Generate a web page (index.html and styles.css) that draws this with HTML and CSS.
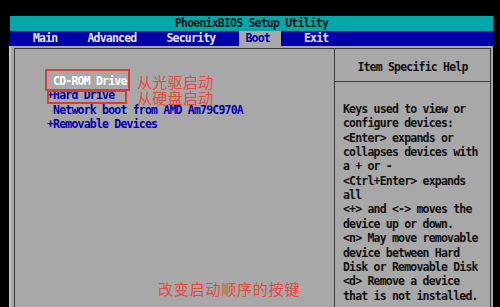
FILE: index.html
```html
<!DOCTYPE html>
<html lang="zh-CN">
<head>
<meta charset="UTF-8">
<meta name="viewport" content="width=device-width, initial-scale=1.0">
<title>PhoenixBIOS Setup Utility</title>
<link rel="stylesheet" href="styles.css">
</head>
<body>

<!-- BIOS screen -->
<div class="screen">
    <div class="title-bar">PhoenixBIOS Setup Utility</div>

    <div class="menu-bar">
        <span class="menu-item">Main</span>
        <span class="menu-item">Advanced</span>
        <span class="menu-item">Security</span>
        <span class="menu-item active">Boot</span>
        <span class="menu-item">Exit</span>
    </div>

    <div class="main">
        <div class="frame">
            <div class="boot-list">
                <div class="boot-item selected"> CD-ROM Drive</div>
                <div class="boot-item">+Hard Drive</div>
                <div class="boot-item"> Network boot from AMD Am79C970A</div>
                <div class="boot-item">+Removable Devices</div>
            </div>

            <div class="help">
                <div class="help-title">Item Specific Help</div>
                <div class="help-body">Keys used to view or
configure devices:
&lt;Enter&gt; expands or
collapses devices with
a + or -
&lt;Ctrl+Enter&gt; expands
all
&lt;+&gt; and &lt;-&gt; moves the
device up or down.
&lt;n&gt; May move removable
device between Hard
Disk or Removable Disk
&lt;d&gt; Remove a device
that is not installed.</div>
            </div>
        </div>
    </div>
</div>

<!-- Annotations drawn over the screenshot -->
<div class="mark mark-cdrom"></div>
<div class="mark mark-hdd"></div>
<div class="note note-cdrom">从光驱启动</div>
<div class="note note-hdd">从硬盘启动</div>
<div class="note note-keys">改变启动顺序的按键</div>

</body>
</html>
```

FILE: styles.css
```css
body {
    margin: 0;
    width: 500px;
    height: 307px;
    overflow: hidden;
    background-color: #000;
    position: relative;
    font-family: "DejaVu Sans Mono", "Liberation Mono", monospace;
    font-size: 11.5px;
    font-weight: bold;
    letter-spacing: -0.8px;
}

.screen {
    margin: 16px 0 0 10px;
    width: 483px;
}

/* Title + menu */
.title-bar {
    height: 15px;
    line-height: 15px;
    background-color: #00a8a8;
    color: #062020;
    text-align: center;
}

.menu-bar {
    display: flex;
    gap: 16px;
    height: 15px;
    line-height: 15px;
    padding-left: 16px;
    background-color: #0000a8;
}

.menu-item {
    padding: 0 7px;
    color: #e4e4ee;
}

.menu-item.active {
    padding-right: 11px;
    background-color: #a8a8a8;
    color: #0000a8;
}

/* Main area */
.main {
    height: 261px;
    padding: 2px 2px 0 3px;
    box-sizing: border-box;
    background-color: #a8a8a8;
    border-left: 2px solid #c4c4c4;
    margin-left: -1px;
    overflow: hidden;
}

.frame {
    display: flex;
    height: 300px;
    border: 1px solid #3a3a3a;
    border-bottom: none;
}

.boot-list {
    width: 319px;
    padding: 25px 0 0 32px;
    box-sizing: border-box;
    line-height: 14.38px;
    color: #0000a8;
}

.boot-item {
    white-space: pre;
}

.boot-item.selected {
    color: #fff;
}

.help {
    flex: 1;
    border-left: 1px solid #3a3a3a;
    color: #101010;
    line-height: 14.38px;
}

.help-title {
    height: 33px;
    padding-top: 10.7px;
    box-sizing: border-box;
    text-align: center;
    border-bottom: 1px solid #3a3a3a;
}

.help-body {
    padding: 19.8px 0 0 8px;
    white-space: pre-line;
}

/* Red annotations */
.mark {
    position: absolute;
    border: 2px solid #dc3a32;
    box-sizing: border-box;
}

.mark-cdrom {
    left: 45px;
    top: 69px;
    width: 85px;
    height: 22px;
}

.mark-hdd {
    left: 47px;
    top: 90px;
    width: 80px;
    height: 14px;
}

.note {
    position: absolute;
    font-family: "Noto Sans CJK SC", sans-serif;
    font-weight: normal;
    font-size: 15px;
    line-height: 15px;
    letter-spacing: 0.3px;
    color: #e4483e;
}

.note-cdrom {
    left: 137px;
    top: 74px;
}

.note-hdd {
    left: 137px;
    top: 90px;
}

.note-keys {
    left: 158px;
    top: 281px;
    letter-spacing: 0.8px;
}
```
